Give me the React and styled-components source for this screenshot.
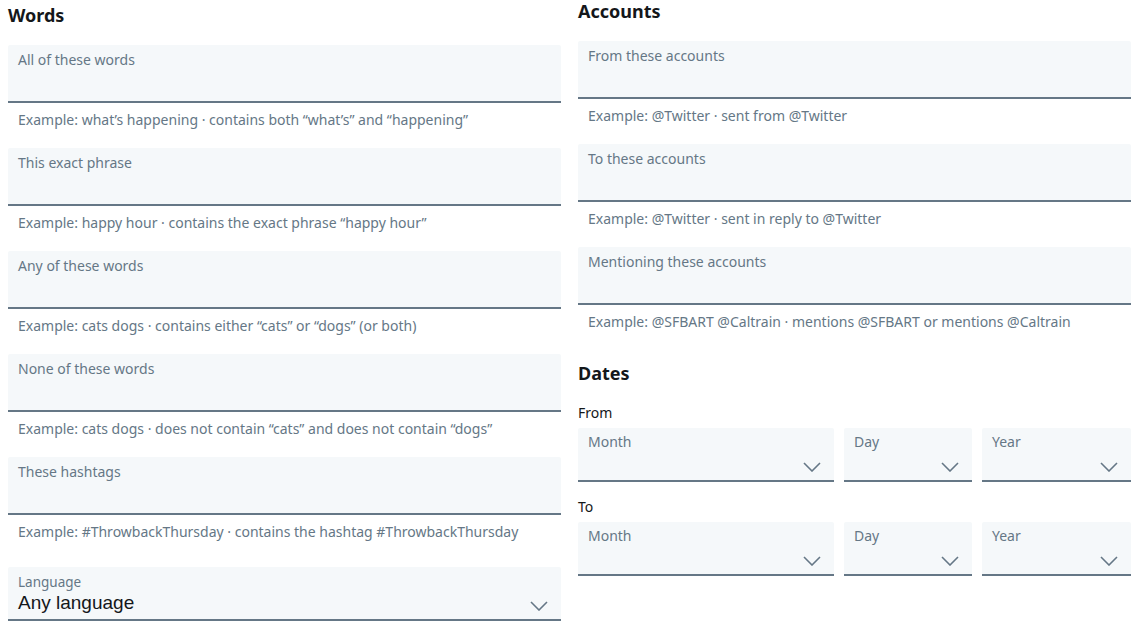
import React from "react";
import styled, { createGlobalStyle } from "styled-components";

const GlobalStyle = createGlobalStyle`
  *, *::before, *::after {
    box-sizing: border-box;
  }
  body {
    margin: 0;
    background: #ffffff;
    font-family: "Noto Sans", "Open Sans", sans-serif;
    color: #14171a;
  }
`;

const wordFields = [
  {
    label: "All of these words",
    help: "Example: what’s happening · contains both “what’s” and “happening”",
  },
  {
    label: "This exact phrase",
    help: "Example: happy hour · contains the exact phrase “happy hour”",
  },
  {
    label: "Any of these words",
    help: "Example: cats dogs · contains either “cats” or “dogs” (or both)",
  },
  {
    label: "None of these words",
    help: "Example: cats dogs · does not contain “cats” and does not contain “dogs”",
  },
  {
    label: "These hashtags",
    help: "Example: #ThrowbackThursday · contains the hashtag #ThrowbackThursday",
  },
];

const accountFields = [
  { label: "From these accounts", help: "Example: @Twitter · sent from @Twitter" },
  { label: "To these accounts", help: "Example: @Twitter · sent in reply to @Twitter" },
  {
    label: "Mentioning these accounts",
    help: "Example: @SFBART @Caltrain · mentions @SFBART or mentions @Caltrain",
  },
];

const Chevron = () => (
  <ChevronIcon viewBox="0 0 18 10" width="18" height="10">
    <polyline points="1,1 9,9 17,1" fill="none" stroke="#657786" strokeWidth="1.6" />
  </ChevronIcon>
);

const TextField = ({ label, help }) => (
  <Field>
    <Box>
      <Label>{label}</Label>
    </Box>
    <Help>{help}</Help>
  </Field>
);

const DateRow = ({ title }) => (
  <>
    <SubLabel>{title}</SubLabel>
    <DateGrid>
      {["Month", "Day", "Year"].map((name) => (
        <Select key={name}>
          <Label>{name}</Label>
          <Chevron />
        </Select>
      ))}
    </DateGrid>
  </>
);

const App = () => (
  <>
    <GlobalStyle />
    <Page>
      <Column $offset={4}>
        <Heading>Words</Heading>
        {wordFields.map((f) => (
          <TextField key={f.label} {...f} />
        ))}
        <LanguageBox>
          <SmallLabel>Language</SmallLabel>
          <Value>Any language</Value>
          <Chevron />
        </LanguageBox>
      </Column>
      <Column $offset={0}>
        <Heading>Accounts</Heading>
        {accountFields.map((f) => (
          <TextField key={f.label} {...f} />
        ))}
        <Heading $top={12}>Dates</Heading>
        <DateRow title="From" />
        <DateRow title="To" />
      </Column>
    </Page>
  </>
);

const Page = styled.div`
  display: grid;
  grid-template-columns: 553px 553px;
  column-gap: 17px;
  padding: 0 17px 0 8px;
`;

const Column = styled.div`
  display: flex;
  flex-direction: column;
  padding-top: ${(p) => p.$offset}px;
`;

const Heading = styled.h2`
  margin: ${(p) => p.$top || 0}px 0 19px;
  font-size: 18px;
  line-height: 22px;
  font-weight: 700;
  color: #14171a;
`;

const Field = styled.div`
  display: flex;
  flex-direction: column;
  margin-bottom: 18px;
`;

const Box = styled.div`
  height: 58px;
  background: #f5f8fa;
  border-bottom: 2px solid #657786;
  border-radius: 2px 2px 0 0;
  padding: 5px 10px 0;
`;

const Label = styled.div`
  font-size: 14px;
  line-height: 20px;
  color: #657786;
`;

const Help = styled.div`
  margin-top: 7px;
  padding: 0 10px;
  font-size: 14px;
  line-height: 20px;
  color: #657786;
  white-space: nowrap;
`;

const LanguageBox = styled.div`
  position: relative;
  margin-top: 7px;
  height: 54px;
  background: #f5f8fa;
  border-bottom: 2px solid #657786;
  border-radius: 2px 2px 0 0;
  padding: 7px 10px 0;
`;

const SmallLabel = styled.div`
  font-size: 13.5px;
  line-height: 16px;
  color: #657786;
`;

const Value = styled.div`
  font-family: "Liberation Sans", Arial, sans-serif;
  font-size: 19px;
  line-height: 26px;
  color: #14171a;
`;

const SubLabel = styled.div`
  font-size: 14px;
  line-height: 20px;
  color: #14171a;
  margin-bottom: 5px;
`;

const DateGrid = styled.div`
  display: grid;
  grid-template-columns: 256px 128px 1fr;
  column-gap: 10px;
  margin-bottom: 15px;
`;

const Select = styled.div`
  position: relative;
  height: 54px;
  background: #f5f8fa;
  border-bottom: 2px solid #657786;
  border-radius: 2px 2px 0 0;
  padding: 4px 10px 0;
`;

const ChevronIcon = styled.svg`
  position: absolute;
  right: 13px;
  bottom: 8px;
`;

export default App;
